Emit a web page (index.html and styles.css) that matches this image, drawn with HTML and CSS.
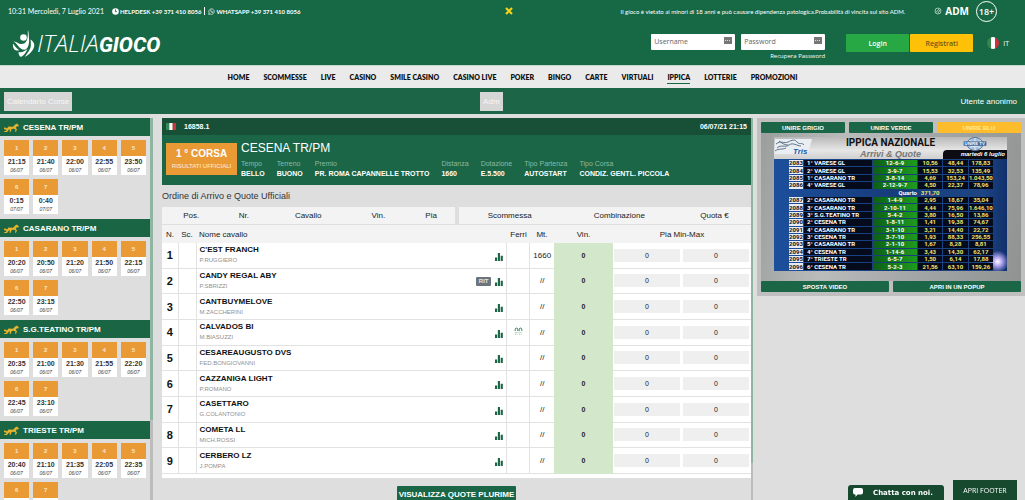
FILE: index.html
```
<!DOCTYPE html>
<html lang="it">
<head>
<meta charset="utf-8">
<meta name="viewport" content="width=device-width, initial-scale=1">
<title>ItaliaGioco - Ippica</title>
<link rel="stylesheet" href="styles.css">
</head>
<body>
<svg class="defs" aria-hidden="true">
  <symbol id="bars" viewBox="0 0 9 9"><path d="M0 5h2.400v4H0zM3.200 0h2.400v9H3.200zM6.400 3h2.400v6H6.400z"/></symbol>
  <symbol id="horse" viewBox="0 0 15 9"><path d="M0 4.500l2 .3 1 .8 1.500-2 4.500.2 2.500-2.600L13 .4l1.900 2.100-.6.9-1.500-.2-1 1.800 1.200 1.300-1 2.500h-1l.5-2.200-1.500-.8-2.400.3-.8 2.600H5.500l.5-2.500L4.500 7 3 8.900H.2l.1-1h1.600l.6-1L0 6z"/></symbol>
</svg>

<header class="site-header">
  <div class="topbar">
    <div class="topleft">
      <span class="clock">10:31 Mercoledì, 7 Luglio 2021</span>
      <span class="contacts">
        <svg class="ico" viewBox="0 0 8 8"><circle cx="4" cy="4" r="3.800" fill="#fff"/><path d="M4 1.800v2.400h1.600" fill="none" stroke="#176845"/></svg>
        HELPDESK +39 371 410 8056 <i class="bar"></i>
        <svg class="ico" viewBox="0 0 8 8"><path d="M.8 7.300l.5-1.700A3.100 3.100 0 1 1 2.500 6.800z" fill="none" stroke="#fff" stroke-width=".8"/><path d="M2.700 2.500c0 1.600 1.200 2.800 2.700 2.900l.4-.8-.9-.5-.5.3-.8-.9.3-.4-.4-.9z" fill="#fff"/></svg>
        WHATSAPP +39 371 410 8056
      </span>
    </div>
    <button class="close" aria-label="Chiudi"><svg viewBox="0 0 8 8"><path d="M1 1l6 6M7 1L1 7" stroke="#f2d21c" stroke-width="2.200"/></svg></button>
    <div class="topright">
      <span class="notice">Il gioco è vietato ai minori di 18 anni e può causare dipendenza patologica.Probabilità di vincita sul sito ADM.</span>
      <span class="adm"><svg viewBox="0 0 8 8"><circle cx="4" cy="4" r="3" fill="none" stroke="#9fc4b1"/><path d="M2 5.500L5 2M4 6l2-3" stroke="#d6e6dd" stroke-width=".8"/></svg>ADM</span>
      <span class="age">18+</span>
    </div>
  </div>
  <div class="brandrow">
    <a class="logo" href="#" aria-label="ItaliaGioco">
      <svg class="mark" viewBox="0 0 24 30"><g fill="#fff"><circle cx="11.500" cy="8.500" r="3.300"/><path d="M16 1c-.6 4 .6 6-1.300 10.500-1 2.500-3 3.500-5.200 3.500C6 15 4.500 12 1.500 12.500c4 1.500 5 8 11 8.300 4-1.300 5-6.500 4.500-11.300C16.700 6.500 17 4 16 1z"/><path d="M18.500 10.500c4 2.500 4.500 6 3 9-1.500 3.500-5.500 7-8.700 8.300 2-3 5.700-7 6-10.800.2-2.200 0-4.500-.3-6.500zM1 14.500c2 3 3.500 5 6.200 6.700-1.700.8-3.700.2-4.800-.8C1 19 .8 16.500 1 14.500zM6.500 23c3.500.7 6-.5 9-3-1.500 3.500-3.500 6.500-6.500 8-1.500-.5-2.500-2.500-2.500-5z"/></g></svg>
      <span class="thin">ITALIA</span><span class="fat">GIOCO</span>
    </a>
    <form class="login">
      <label class="field"><input type="text" placeholder="Username" aria-label="Username"><svg viewBox="0 0 8 7"><path d="M0 0h8v7H0z" fill="#777"/><path d="M1 3.500h6" stroke="#ddd" stroke-dasharray="1 1"/></svg></label>
      <div class="pwcol">
        <label class="field"><input type="password" placeholder="Password" aria-label="Password"><svg viewBox="0 0 8 7"><path d="M0 0h8v7H0z" fill="#777"/><path d="M1 3.500h6" stroke="#ddd" stroke-dasharray="1 1"/></svg></label>
        <a class="recover" href="#">Recupera Password</a>
      </div>
      <button type="button" class="btn-login">Login</button>
      <button type="button" class="btn-reg">Registrati</button>
      <a class="lang" href="#"><svg viewBox="0 0 12 12"><clipPath id="round"><circle cx="6" cy="6" r="6"/></clipPath><g clip-path="url(#round)"><path d="M0 0h4v12H0z" fill="#38864c"/><path d="M4 0h4v12H4z" fill="#fff"/><path d="M8 0h4v12H8z" fill="#d0303c"/></g></svg>IT</a>
    </form>
  </div>
  <nav class="mainnav">
    <a href="#">HOME</a><a href="#">SCOMMESSE</a><a href="#">LIVE</a><a href="#">CASINO</a><a href="#">SMILE CASINO</a><a href="#">CASINO LIVE</a><a href="#">POKER</a><a href="#">BINGO</a><a href="#">CARTE</a><a href="#">VIRTUALI</a><a href="#" class="on">IPPICA</a><a href="#">LOTTERIE</a><a href="#">PROMOZIONI</a>
  </nav>
</header>

<div class="subbar">
  <div><button>Calendario Corse</button></div>
  <div><button>Adm</button></div>
  <div class="end">Utente anonimo</div>
</div>

<main class="columns">
  <aside class="calendar">
    <section>
      <h2><svg><use href="#horse"/></svg>CESENA TR/PM</h2>
      <div class="races">
        <a href="#"><b>1</b><strong>21:15</strong><em>06/07</em></a><a href="#"><b>2</b><strong>21:40</strong><em>06/07</em></a><a href="#"><b>3</b><strong>22:00</strong><em>06/07</em></a><a href="#"><b>4</b><strong>22:55</strong><em>06/07</em></a><a href="#"><b>5</b><strong>23:50</strong><em>06/07</em></a><a href="#"><b>6</b><strong>0:15</strong><em>07/07</em></a><a href="#"><b>7</b><strong>0:40</strong><em>07/07</em></a>
      </div>
    </section>
    <section>
      <h2><svg><use href="#horse"/></svg>CASARANO TR/PM</h2>
      <div class="races">
        <a href="#"><b>1</b><strong>20:20</strong><em>06/07</em></a><a href="#"><b>2</b><strong>20:50</strong><em>06/07</em></a><a href="#"><b>3</b><strong>21:20</strong><em>06/07</em></a><a href="#"><b>4</b><strong>21:50</strong><em>06/07</em></a><a href="#"><b>5</b><strong>22:15</strong><em>06/07</em></a><a href="#"><b>6</b><strong>22:50</strong><em>06/07</em></a><a href="#"><b>7</b><strong>23:15</strong><em>06/07</em></a>
      </div>
    </section>
    <section>
      <h2><svg><use href="#horse"/></svg>S.G.TEATINO TR/PM</h2>
      <div class="races">
        <a href="#"><b>1</b><strong>20:35</strong><em>06/07</em></a><a href="#"><b>2</b><strong>21:00</strong><em>06/07</em></a><a href="#"><b>3</b><strong>21:30</strong><em>06/07</em></a><a href="#"><b>4</b><strong>21:55</strong><em>06/07</em></a><a href="#"><b>5</b><strong>22:20</strong><em>06/07</em></a><a href="#"><b>6</b><strong>22:45</strong><em>06/07</em></a><a href="#"><b>7</b><strong>23:10</strong><em>06/07</em></a>
      </div>
    </section>
    <section>
      <h2><svg><use href="#horse"/></svg>TRIESTE TR/PM</h2>
      <div class="races">
        <a href="#"><b>1</b><strong>20:40</strong><em>06/07</em></a><a href="#"><b>2</b><strong>21:10</strong><em>06/07</em></a><a href="#"><b>3</b><strong>21:35</strong><em>06/07</em></a><a href="#"><b>4</b><strong>22:05</strong><em>06/07</em></a><a href="#"><b>5</b><strong>22:35</strong><em>06/07</em></a><a href="#"><b>6</b></a><a href="#"><b>7</b></a>
      </div>
    </section>
  </aside>

  <section class="race">
    <div class="racebar"><svg viewBox="0 0 10 7"><path d="M0 0h3.300v7H0z" fill="#2f8a55"/><path d="M3.300 0h3.400v7H3.300z" fill="#fff"/><path d="M6.700 0H10v7H6.700z" fill="#c8353f"/></svg><span>16858.1</span><time>06/07/21 21:15</time></div>
    <div class="racehead">
      <div class="badge"><strong>1 ° CORSA</strong><span>RISULTATI UFFICIALI</span></div>
      <div>
        <h1>CESENA TR/PM</h1>
        <dl>
          <div><dt>Tempo</dt><dd>BELLO</dd></div>
          <div><dt>Terreno</dt><dd>BUONO</dd></div>
          <div><dt>Premio</dt><dd>PR. ROMA CAPANNELLE TROTTO</dd></div>
          <div><dt>Distanza</dt><dd>1660</dd></div>
          <div><dt>Dotazione</dt><dd>E.5.500</dd></div>
          <div><dt>Tipo Partenza</dt><dd>AUTOSTART</dd></div>
          <div><dt>Tipo Corsa</dt><dd>CONDIZ. GENTL. PICCOLA</dd></div>
        </dl>
      </div>
    </div>
    <h3>Ordine di Arrivo e Quote Ufficiali</h3>
    <div class="orders">
      <table><colgroup><col class="w20"><col class="w16"><col class="w28"><col class="w20"><col class="w16"></colgroup><tr><th>Pos.</th><th>Nr.</th><th>Cavallo</th><th>Vin.</th><th>Pia</th></tr></table>
      <table><colgroup><col class="w35"><col class="w40"><col class="w25"></colgroup><tr><th>Scommessa</th><th>Combinazione</th><th>Quota €</th></tr></table>
    </div>
    <div class="runnerbox">
    <table class="runners">
      <colgroup><col class="c-n"><col class="c-sc"><col><col class="c-ferri"><col class="c-mt"><col class="c-vin"><col class="c-pia"><col class="c-pia"></colgroup>
      <thead><tr><th>N.</th><th>Sc.</th><th class="l">Nome cavallo</th><th>Ferri</th><th>Mt.</th><th>Vin.</th><th colspan="2">Pia Min-Max</th></tr></thead>
      <tbody>
        <tr><td>1</td><td></td><td><div class="horse"><p><b>C'EST FRANCH</b><small>P.RUGGIERO</small></p><svg><use href="#bars"/></svg></div></td><td></td><td>1660</td><td>0</td><td><span>0</span></td><td><span>0</span></td></tr>
        <tr><td>2</td><td></td><td><div class="horse"><p><b>CANDY REGAL ABY</b><small>P.SBRIZZI</small></p><i class="tag">RIT</i><svg><use href="#bars"/></svg></div></td><td></td><td>//</td><td>0</td><td><span>0</span></td><td><span>0</span></td></tr>
        <tr><td>3</td><td></td><td><div class="horse"><p><b>CANTBUYMELOVE</b><small>M.ZACCHERINI</small></p><svg><use href="#bars"/></svg></div></td><td></td><td>//</td><td>0</td><td><span>0</span></td><td><span>0</span></td></tr>
        <tr><td>4</td><td></td><td><div class="horse"><p><b>CALVADOS BI</b><small>M.BIASUZZI</small></p><svg><use href="#bars"/></svg></div></td><td><svg class="shoes" viewBox="0 0 9 8"><path d="M1.200 4V2.400a1.300 1.300 0 0 1 2.600 0V4M5.200 4V2.400a1.300 1.300 0 0 1 2.600 0V4" fill="none" stroke="#357d5a"/><path d="M.7 5.500h3.500M4.700 5.500h3.500M1 7.200h3M5 7.200h3" stroke="#9fc9b3" stroke-dasharray="1 .6"/></svg></td><td>//</td><td>0</td><td><span>0</span></td><td><span>0</span></td></tr>
        <tr><td>5</td><td></td><td><div class="horse"><p><b>CESAREAUGUSTO DVS</b><small>FED.BONGIOVANNI</small></p><svg><use href="#bars"/></svg></div></td><td></td><td>//</td><td>0</td><td><span>0</span></td><td><span>0</span></td></tr>
        <tr><td>6</td><td></td><td><div class="horse"><p><b>CAZZANIGA LIGHT</b><small>P.ROMANO</small></p><svg><use href="#bars"/></svg></div></td><td></td><td>//</td><td>0</td><td><span>0</span></td><td><span>0</span></td></tr>
        <tr><td>7</td><td></td><td><div class="horse"><p><b>CASETTARO</b><small>G.COLANTONIO</small></p><svg><use href="#bars"/></svg></div></td><td></td><td>//</td><td>0</td><td><span>0</span></td><td><span>0</span></td></tr>
        <tr><td>8</td><td></td><td><div class="horse"><p><b>COMETA LL</b><small>MICH.ROSSI</small></p><svg><use href="#bars"/></svg></div></td><td></td><td>//</td><td>0</td><td><span>0</span></td><td><span>0</span></td></tr>
        <tr><td>9</td><td></td><td><div class="horse"><p><b>CERBERO LZ</b><small>J.POMPA</small></p><svg><use href="#bars"/></svg></div></td><td></td><td>//</td><td>0</td><td><span>0</span></td><td><span>0</span></td></tr>
      </tbody>
    </table>
    </div>
    <button class="plurime">VISUALIZZA QUOTE PLURIME</button>
  </section>

  <aside class="video">
    <div class="tabs"><button>UNIRE GRIGIO</button><button>UNIRE VERDE</button><button class="on">UNIRE BLU</button></div>
    <div class="screen">
      <div class="board">
        <div class="boardhead">
          <svg class="tris" viewBox="0 0 42 20"><path d="M1 2h37l-4 15H1z" fill="#e9eef3"/><path d="M2 7c5-4 8 0 12-2s7-3 9 0 5 0 7 3M3 11c4-4 8 0 12-3s8 1 12 1M5 4c3 2 5 4 9 4M1 14c4-3 7-1 11-3" fill="none" stroke="#5d7388"/><text x="19" y="17" class="tristext">Tris</text></svg>
          <div class="titles"><strong>IPPICA NAZIONALE</strong><em>Arrivi &amp; Quote</em></div>
          <div class="date"><svg viewBox="0 0 28 16"><ellipse cx="14" cy="8" rx="9" ry="7.500" fill="#a9bfd8" stroke="#4a6b99"/><path d="M7 4c5 2 9 2 14 0M8 12c4-2 8-2 12 0M14 1v14" fill="none" stroke="#e9f0f8"/><path d="M1 5h26v5H1z" fill="#3c649c"/><text x="2" y="9" class="unire">UNIRE TV</text></svg><span>martedì 6 luglio</span></div>
        </div>
        <table>
          <tr><td>2083</td><td>1° VARESE GL</td><td>12-6-9</td><td>10,56</td><td>48,44</td><td>178,83</td></tr>
          <tr><td>2084</td><td>2° VARESE GL</td><td>3-9-7</td><td>15,53</td><td>32,53</td><td>135,49</td></tr>
          <tr><td>2085</td><td>1° CASARANO TR</td><td>3-8-14</td><td>4,69</td><td>153,24</td><td>1.043,50</td></tr>
          <tr><td>2086</td><td>4° VARESE GL</td><td>2-12-9-7</td><td>4,50</td><td>22,37</td><td>78,96</td></tr>
          <tr class="quarto"><td></td><td></td><td>Quarto</td><td>371,70</td><td></td><td></td></tr>
          <tr><td>2087</td><td>2° CASARANO TR</td><td>1-4-9</td><td>2,95</td><td>18,67</td><td>35,04</td></tr>
          <tr><td>2088</td><td>3° CASARANO TR</td><td>2-10-11</td><td>4,44</td><td>75,96</td><td>1.646,10</td></tr>
          <tr><td>2089</td><td>3° S.G.TEATINO TR</td><td>5-4-2</td><td>3,80</td><td>16,50</td><td>13,86</td></tr>
          <tr><td>2090</td><td>2° CESENA TR</td><td>1-8-11</td><td>1,41</td><td>19,38</td><td>74,67</td></tr>
          <tr><td>2091</td><td>4° CASARANO TR</td><td>3-1-10</td><td>3,21</td><td>14,40</td><td>22,72</td></tr>
          <tr><td>2092</td><td>3° CESENA TR</td><td>3-7-10</td><td>1,93</td><td>88,33</td><td>256,55</td></tr>
          <tr><td>2093</td><td>5° CASARANO TR</td><td>2-1-10</td><td>1,67</td><td>8,28</td><td>8,81</td></tr>
          <tr><td>2094</td><td>4° CESENA TR</td><td>1-14-6</td><td>3,43</td><td>14,30</td><td>62,17</td></tr>
          <tr><td>2095</td><td>7° TRIESTE TR</td><td>6-5-7</td><td>1,50</td><td>6,14</td><td>17,88</td></tr>
          <tr><td>2096</td><td>6° CESENA TR</td><td>5-2-3</td><td>21,56</td><td>63,10</td><td>159,26</td></tr>
        </table>
      </div>
    </div>
    <div class="tabs"><button>SPOSTA VIDEO</button><button>APRI IN UN POPUP</button></div>
  </aside>
</main>

<div class="dock">
  <button class="chat"><svg viewBox="0 0 10 9"><path d="M2 0h6a2 2 0 0 1 2 2v2.500a2 2 0 0 1-2 2H4.500L2.500 9V6.500H2a2 2 0 0 1-2-2V2a2 2 0 0 1 2-2z" fill="#fff"/></svg><span>Chatta con noi.</span></button>
  <button class="footer-toggle">APRI FOOTER</button>
</div>
</body>
</html>
```
FILE: styles.css
```
* { box-sizing: border-box; }
body {
  margin: 0;
  height: 100vh;
  display: flex;
  flex-direction: column;
  overflow: hidden;
  background: #dedede;
  font-family: "Liberation Sans", Arial, sans-serif;
  font-size: 8px;
  color: #222;
}
button { border: 0; padding: 0; font: inherit; color: inherit; cursor: pointer; }
a { color: inherit; text-decoration: none; }
h1, h2, h3, p, dl, dd { margin: 0; }
table { border-collapse: collapse; border-spacing: 0; width: 100%; table-layout: fixed; }
th { font-weight: 400; padding: 0; }
td { padding: 0; }
.defs { position: absolute; width: 0; height: 0; }

/* header */
.site-header { font-family: "Open Sans", "Noto Sans", sans-serif; color: #fff; background: #176845; }
.topbar { display: grid; grid-template-columns: minmax(0, 1fr) auto minmax(0, 1fr); align-items: center; height: 22px; padding: 0 16px 0 8px; font-family: Lato, "Open Sans", sans-serif; font-size: 7px; }
.topleft, .topright { display: flex; align-items: center; white-space: nowrap; }
.topright { justify-content: flex-end; padding-right: 12px; }
.contacts { display: flex; align-items: center; gap: 1px; margin-left: 8px; font-size: 6px; font-weight: 700; }
.ico { width: 7px; height: 7px; }
.bar { width: 1px; height: 8px; margin: 0 2px; background: #fff; }
.close { width: 8px; height: 8px; background: none; display: flex; }
.close svg { width: 8px; height: 8px; }
.notice { font-size: 6px; }
.adm { display: flex; align-items: center; gap: 3px; margin-left: 29px; font-family: "Open Sans", sans-serif; font-size: 10px; font-weight: 700; }
.adm svg { width: 8px; height: 8px; }
.age { display: flex; align-items: center; justify-content: center; width: 21px; height: 21px; margin-left: 7px; border: 1px solid #fff; border-radius: 50%; font-family: "Open Sans", sans-serif; font-size: 9px; font-weight: 600; }
.brandrow { display: flex; justify-content: space-between; align-items: flex-start; height: 43px; padding: 6px 16px 0 12px; }
.logo { display: flex; align-items: baseline; font-style: italic; line-height: 30px; }
.mark { width: 24px; height: 30px; margin-right: 1px; align-self: center; }
.thin { font-size: 24px; font-weight: 300; }
.fat { font-size: 21px; font-weight: 800; font-family: Roboto, sans-serif; }
.login { display: flex; align-items: flex-start; padding-top: 6px; }
.field { display: flex; align-items: flex-start; width: 84px; height: 16px; padding: 3px; background: #fff; border-radius: 1px; }
.field input { flex: 1; min-width: 0; height: 10px; padding: 0; border: 0; outline: 0; background: none; font: 7px/10px "Open Sans", sans-serif; color: #444; }
.field input::placeholder { color: #666; }
.field svg { width: 8px; height: 7px; }
.pwcol { margin-left: 6px; display: flex; flex-direction: column; align-items: flex-end; }
.recover { margin-top: 2px; font-size: 6px; line-height: 8px; }
.btn-login, .btn-reg { width: 63px; height: 18px; border-radius: 1px; font-size: 7px; font-weight: 600; }
.btn-login { margin-left: 21px; background: #28a745; }
.btn-reg { margin-left: 1px; background: #ffc107; color: #6b5c14; }
.lang { display: flex; align-items: center; gap: 4px; height: 18px; margin-left: 14px; font-size: 7px; }
.lang svg { width: 12px; height: 12px; }
.mainnav { display: flex; justify-content: center; align-items: center; gap: 14px; height: 23px; background: #ebeaea; border-top: 1px solid #c4d8cd; color: #111; font-size: 7px; font-family: Lato, "Open Sans", sans-serif; font-weight: 800; }
.mainnav a { line-height: 12px; border-bottom: 1px solid transparent; }
.mainnav a.on { border-color: #176845; }

/* sub bar */
.subbar { display: grid; grid-template-columns: 47% auto 1fr; align-items: center; height: 26px; padding: 0 8px 0 4px; background: #1c6546; color: #fff; }
.subbar .end { text-align: right; }
.subbar button { height: 19px; padding: 0 3px; background: #d6d6d6; color: #f6f6f6; }

/* columns */
.columns { flex: 1; min-height: 0; display: grid; grid-template-columns: 153px minmax(0, 1fr) 268px; padding-top: 4px; }
.calendar { overflow: hidden; border-right: 3px solid; border-image: linear-gradient(#8fb5a3 79%, #bcbcbc 79%) 1; }
.calendar h2 { display: flex; align-items: center; gap: 4px; height: 18px; padding-left: 4px; background: #1a6644; color: #fff; font-size: 8px; }
.calendar h2 svg { width: 15px; height: 9px; fill: #e5b32d; }
.races { display: grid; grid-template-columns: repeat(5, 1fr); gap: 4px; padding: 4px 4px 5px; }
.races a { display: flex; flex-direction: column; height: 35px; background: #fff; text-align: center; }
.races b { background: #ea9a35; color: #fbe6c8; font-size: 6px; font-weight: 700; line-height: 16px; }
.races strong { font-size: 7px; line-height: 11px; color: #333; }
.races em { font-size: 5px; line-height: 7px; color: #444; }

.race { display: flex; flex-direction: column; overflow: hidden; margin: 0 4px 0 9px; border-right: 2px solid; border-image: linear-gradient(#8fb5a3 90%, #bcbcbc 90%) 1; }
.racebar { flex: none; display: flex; align-items: center; height: 17px; padding: 0 4px; background: #174f37; color: #fff; font-size: 7px; font-weight: 700; }
.racebar svg { width: 10px; height: 7px; margin-right: 8px; }
.racebar time { margin-left: auto; }
.racehead { flex: none; display: flex; gap: 4px; height: 50px; padding: 6px 4px 0; background: #1a6646; color: #fff; }
.badge { display: flex; flex-direction: column; align-items: center; justify-content: center; gap: 3px; width: 71px; height: 32px; margin-top: 2px; background: #ea9a35; white-space: nowrap; }
.badge strong { font-size: 10px; line-height: 10px; }
.badge span { font-size: 6px; line-height: 8px; color: #fdf0dc; }
.racehead h1 { font-size: 12px; font-weight: 400; line-height: 14px; }
.racehead dl { display: flex; gap: 12px; margin-top: 4px; white-space: nowrap; }
.racehead dt { font-size: 7px; line-height: 9px; color: #8db8a2; }
.racehead dd { font-size: 7px; line-height: 11px; font-weight: 700; }
.race h3 { flex: none; font-size: 9px; font-weight: 400; line-height: 22px; color: #333; }
.orders { flex: none; display: flex; gap: 4px; }
.orders table { height: 17px; background: #f3f3f3; }
.w16 { width: 16%; } .w20 { width: 20%; } .w25 { width: 25%; } .w28 { width: 28%; } .w35 { width: 35%; } .w40 { width: 40%; }
.runnerbox { flex: none; margin-top: 1px; padding-bottom: 4px; background: #fff; }
.runners { height: 249px; }
.runners thead th { height: 18px; background: #f3f3f3; }
.runners th.l { text-align: left; padding-left: 3px; }
.c-n { width: 16px; } .c-sc { width: 18px; } .c-ferri { width: 23px; } .c-mt { width: 24px; } .c-vin { width: 59px; } .c-pia { width: 69px; }
.runners tbody td { border-bottom: 1px solid #e2e2e2; text-align: center; }
.runners tbody td:nth-child(-n+4) { border-right: 1px solid #e2e2e2; }
.runners tbody td:first-child { font-size: 11px; font-weight: 700; color: #111; }
.runners tbody td:nth-child(6) { background: #d3e8cb; border-color: #d3e8cb; font-weight: 700; font-size: 7px; }
.runners tbody span { display: block; margin: 0 2px 0 1px; background: #efefef; font-size: 7px; line-height: 13px; }
.horse { display: flex; align-items: center; gap: 4px; padding: 0 3px; text-align: left; }
.horse p { flex: 1; }
.horse b { display: block; font-size: 8px; line-height: 10px; color: #111; }
.horse small { display: block; font-size: 6px; line-height: 10px; color: #8f8f8f; }
.horse svg { width: 8px; height: 8px; margin-top: 3px; fill: #1a6646; }
.tag { padding: 0 3px; margin-top: 2px; border-radius: 1px; background: #6c757d; color: #e4e7ea; font-size: 6px; line-height: 9px; font-style: normal; font-weight: 700; }
.shoes { width: 9px; height: 8px; }
.plurime { flex: none; align-self: center; margin-top: 8px; padding: 0 2px; height: 16px; border-radius: 1px; background: #1a6646; color: #fff; font-weight: 700; }

/* video */
.video { align-self: start; padding: 4px; background: #bfbfbf; }
.tabs { display: flex; gap: 4px; }
.tabs button { flex: 1; height: 11px; border-radius: 1px; background: #1a6646; color: #fff; font-size: 6px; font-weight: 700; }
.tabs .on { background: #fdbc2c; color: #ffe6a6; }
.screen { padding: 4px 14px 10px 13px; background: linear-gradient(100deg, #9a9f9d, #b9bcbb 30%, #a4a7a7 60%, #8f9493); }
.board { background: radial-gradient(circle at 96% 93%, #fff 0, #b9a9f4 4px, transparent 11px), linear-gradient(90deg, #1d4f9c, #163c7c 50%, #1d4584 90%, #10306c); font-family: Roboto, "Liberation Sans", sans-serif; }
.boardhead { display: grid; grid-template-columns: 1fr auto 1fr; height: 22px; background: linear-gradient(#b9b9b9, #e6e6e6 60%, #cfcfcf); }
.tris { width: 42px; height: 20px; }
.tristext { font: italic 700 8px "Liberation Sans", sans-serif; fill: #1c5aa6; }
.titles { display: flex; flex-direction: column; align-items: center; color: #111; white-space: nowrap; }
.titles strong { font-size: 10px; line-height: 12px; font-weight: 700; }
.titles em { font: italic 700 9px/10px "Liberation Sans", sans-serif; color: #777; }
.date { width: 64px; justify-self: end; display: flex; flex-direction: column; align-items: center; }
.date svg { width: 28px; height: 14px; margin-bottom: -1px; z-index: 1; }
.unire { font: 700 5px "Liberation Sans", sans-serif; fill: #fff; }
.date span { align-self: stretch; padding-right: 2px; border-radius: 4px 0 0 0; background: #0c0c12; color: #fff; text-align: right; font: italic 700 6px/9px "Liberation Sans", sans-serif; }
.board table { width: 206px; height: 112px; margin-left: 14px; border-collapse: separate; border-spacing: 1px; }
.board td { background: #060b1c; color: #f0e36c; font-size: 6px; line-height: 6px; font-weight: 700; text-align: center; white-space: nowrap; }
.board td:nth-child(1) { width: 14px; background: #e8ebf2; color: #111; }
.board td:nth-child(2) { width: 68px; padding-left: 3px; color: #fff; text-align: left; }
.board td:nth-child(3) { width: 44px; background: linear-gradient(90deg, #0d5f16, #1f9a1f); color: #fff; }
.board .quarto td { background: none; }
.board .quarto td:nth-child(3) { text-align: right; }

/* floating controls */
.dock { position: fixed; right: 8px; bottom: 0; display: flex; align-items: flex-end; gap: 9px; color: #fff; }
.chat { display: flex; align-items: center; gap: 10px; width: 96px; height: 15px; padding-left: 5px; border-radius: 3px 3px 0 0; background: #17492e; font: 700 7px "DejaVu Sans", sans-serif; }
.chat svg { width: 10px; height: 9px; }
.footer-toggle { width: 64px; height: 20px; background: #17492e; font: 7px "Open Sans", sans-serif; }
```
